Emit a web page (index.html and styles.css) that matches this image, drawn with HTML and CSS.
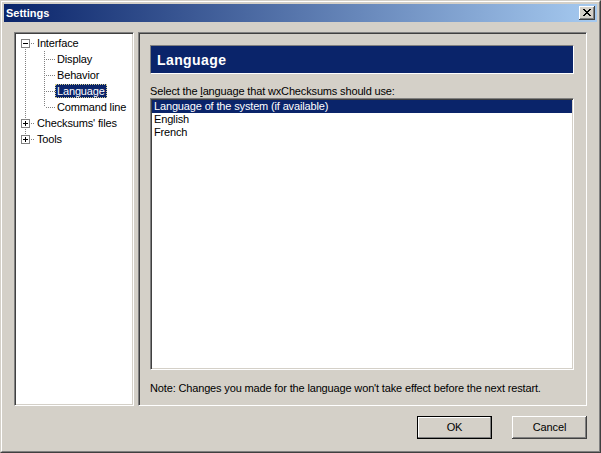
FILE: index.html
```html
<!DOCTYPE html>
<html>
<head>
<meta charset="utf-8">
<title>Settings</title>
<link rel="stylesheet" href="styles.css">
</head>
<body>
<div class="window">
  <div class="frame">
    <div class="titlebar">
      <span class="title">Settings</span>
      <div class="close">
        <svg width="8" height="7" viewBox="0 0 8 7" shape-rendering="crispEdges"><path fill="#000" d="M0 0h2v1H0z M6 0h2v1H6z M1 1h2v1H1z M5 1h2v1H5z M2 2h4v1H2z M3 3h2v1H3z M2 4h4v1H2z M1 5h2v1H1z M5 5h2v1H5z M0 6h2v1H0z M6 6h2v1H6z"/></svg>
      </div>
    </div>
    <div class="content">
      <div class="main">
        <div class="tree sunken">
          <div class="row">
            <svg class="g-root" width="19" height="16" shape-rendering="crispEdges">
              <line x1="9.5" y1="14" x2="9.5" y2="16" stroke="#808080" stroke-dasharray="1 1"/>
              <line x1="15" y1="8.5" x2="19" y2="8.5" stroke="#808080" stroke-dasharray="1 1"/>
              <rect x="5.5" y="4.5" width="8" height="8" fill="#fff" stroke="#808080"/>
              <rect x="7" y="8" width="5" height="1" fill="#000"/>
            </svg>
            <span class="tl">Interface</span>
          </div>
          <div class="row">
            <svg width="39" height="16" shape-rendering="crispEdges">
              <line x1="9.5" y1="0" x2="9.5" y2="16" stroke="#808080" stroke-dasharray="1 1"/>
              <line x1="28.5" y1="0" x2="28.5" y2="16" stroke="#808080" stroke-dasharray="1 1"/>
              <line x1="30" y1="8.5" x2="39" y2="8.5" stroke="#808080" stroke-dasharray="1 1"/>
            </svg>
            <span class="tl">Display</span>
          </div>
          <div class="row">
            <svg width="39" height="16" shape-rendering="crispEdges">
              <line x1="9.5" y1="0" x2="9.5" y2="16" stroke="#808080" stroke-dasharray="1 1"/>
              <line x1="28.5" y1="0" x2="28.5" y2="16" stroke="#808080" stroke-dasharray="1 1"/>
              <line x1="30" y1="8.5" x2="39" y2="8.5" stroke="#808080" stroke-dasharray="1 1"/>
            </svg>
            <span class="tl">Behavior</span>
          </div>
          <div class="row">
            <svg width="39" height="16" shape-rendering="crispEdges">
              <line x1="9.5" y1="0" x2="9.5" y2="16" stroke="#808080" stroke-dasharray="1 1"/>
              <line x1="28.5" y1="0" x2="28.5" y2="16" stroke="#808080" stroke-dasharray="1 1"/>
              <line x1="30" y1="8.5" x2="39" y2="8.5" stroke="#808080" stroke-dasharray="1 1"/>
            </svg>
            <span class="tl selected">Language</span>
          </div>
          <div class="row">
            <svg width="39" height="16" shape-rendering="crispEdges">
              <line x1="9.5" y1="0" x2="9.5" y2="16" stroke="#808080" stroke-dasharray="1 1"/>
              <line x1="28.5" y1="0" x2="28.5" y2="8" stroke="#808080" stroke-dasharray="1 1"/>
              <line x1="30" y1="8.5" x2="39" y2="8.5" stroke="#808080" stroke-dasharray="1 1"/>
            </svg>
            <span class="tl">Command line</span>
          </div>
          <div class="row">
            <svg width="19" height="16" shape-rendering="crispEdges">
              <line x1="9.5" y1="0" x2="9.5" y2="16" stroke="#808080" stroke-dasharray="1 1"/>
              <line x1="15" y1="8.5" x2="19" y2="8.5" stroke="#808080" stroke-dasharray="1 1"/>
              <rect x="5.5" y="4.5" width="8" height="8" fill="#fff" stroke="#808080"/>
              <rect x="7" y="8" width="5" height="1" fill="#000"/>
              <rect x="9" y="6" width="1" height="5" fill="#000"/>
            </svg>
            <span class="tl">Checksums' files</span>
          </div>
          <div class="row">
            <svg width="19" height="16" shape-rendering="crispEdges">
              <line x1="9.5" y1="0" x2="9.5" y2="4" stroke="#808080" stroke-dasharray="1 1"/>
              <line x1="15" y1="8.5" x2="19" y2="8.5" stroke="#808080" stroke-dasharray="1 1"/>
              <rect x="5.5" y="4.5" width="8" height="8" fill="#fff" stroke="#808080"/>
              <rect x="7" y="8" width="5" height="1" fill="#000"/>
              <rect x="9" y="6" width="1" height="5" fill="#000"/>
            </svg>
            <span class="tl">Tools</span>
          </div>
        </div>
        <div class="panel sunken">
          <div class="header">Language</div>
          <div class="label">Select the <u>l</u>anguage that wxChecksums should use:</div>
          <div class="listbox sunken">
            <div class="item selected">Language of the system (if available)</div>
            <div class="item">English</div>
            <div class="item">French</div>
          </div>
          <div class="note">Note: Changes you made for the language won't take effect before the next restart.</div>
        </div>
      </div>
      <div class="buttons">
        <div class="btn default">OK</div>
        <div class="btn">Cancel</div>
      </div>
    </div>
  </div>
</div>
</body>
</html>
```
FILE: styles.css
```css
* { box-sizing: border-box; }
html, body { margin: 0; padding: 0; }
body {
  width: 601px;
  height: 453px;
  overflow: hidden;
  background: #D4D0C8;
  font-family: "Liberation Sans", Arial, sans-serif;
  font-size: 11px;
  letter-spacing: -0.15px;
  color: #000;
}
.window {
  width: 601px;
  height: 453px;
  border: 1px solid;
  border-color: #D4D0C8 #404040 #404040 #D4D0C8;
  background: #D4D0C8;
}
.frame {
  height: 100%;
  border: 1px solid;
  border-color: #fff #808080 #808080 #fff;
  padding: 2px;
  display: flex;
  flex-direction: column;
}
.titlebar {
  height: 18px;
  flex: none;
  background: linear-gradient(to right, #0A246A, #A6CAF0);
  display: flex;
  align-items: center;
  justify-content: space-between;
  padding: 0 2px;
}
.title {
  color: #fff;
  font-weight: bold;
  font-size: 11px;
  letter-spacing: 0;
  line-height: 18px;
}
.close {
  width: 16px;
  height: 14px;
  background: #D4D0C8;
  box-shadow: inset -1px -1px #404040, inset 1px 1px #fff, inset -2px -2px #808080;
  display: flex;
  align-items: center;
  justify-content: center;
}
.close svg { display: block; margin: 0 1px 1px 0; }
.content {
  flex: 1;
  padding: 10px;
  display: flex;
  flex-direction: column;
}
.main {
  display: flex;
  gap: 4px;
  height: 374px;
}
.sunken {
  border: 1px solid;
  border-color: #808080 #fff #fff #808080;
  box-shadow: inset 1px 1px #404040, inset -1px -1px #D4D0C8;
}
.tree {
  width: 120px;
  background: #fff;
  padding: 2px 1px 1px 1px;
}
.row {
  display: flex;
  align-items: center;
  height: 16px;
}
.row svg { display: block; flex: none; }
.tl {
  padding: 0 2px;
  line-height: 14px;
  height: 14px;
  white-space: nowrap;
}
.tl.selected {
  background: #0A246A;
  color: #fff;
  border: 1px dotted #D8D090;
  padding: 0 1px;
  line-height: 12px;
}
.panel {
  flex: 1;
  padding: 12px 12px 10px 11px;
  display: flex;
  flex-direction: column;
}
.header {
  height: 29px;
  flex: none;
  background: #0A246A;
  border: 1px solid;
  border-color: #808080 #fff #fff #808080;
  color: #fff;
  font-weight: bold;
  font-size: 14px;
  letter-spacing: 0.4px;
  padding-left: 6px;
  display: flex;
  align-items: center;
}
.label {
  margin-top: 11px;
  line-height: 13px;
  white-space: nowrap;
}
.listbox {
  flex: 1;
  background: #fff;
  padding: 1px;
}
.item {
  height: 13px;
  line-height: 13px;
  padding-left: 2px;
  white-space: nowrap;
}
.item.selected {
  background: #0A246A;
  color: #fff;
}
.note {
  margin-top: 12px;
  line-height: 13px;
  white-space: nowrap;
}
.buttons {
  margin-top: 10px;
  display: flex;
  justify-content: flex-end;
  gap: 20px;
}
.btn {
  width: 75px;
  height: 23px;
  background: #D4D0C8;
  box-shadow: inset -1px -1px #404040, inset 1px 1px #fff, inset -2px -2px #808080;
  display: flex;
  align-items: center;
  justify-content: center;
  line-height: 13px;
}
.btn.default {
  border: 1px solid #000;
  box-shadow: inset -1px -1px #808080, inset 1px 1px #fff;
}
```
